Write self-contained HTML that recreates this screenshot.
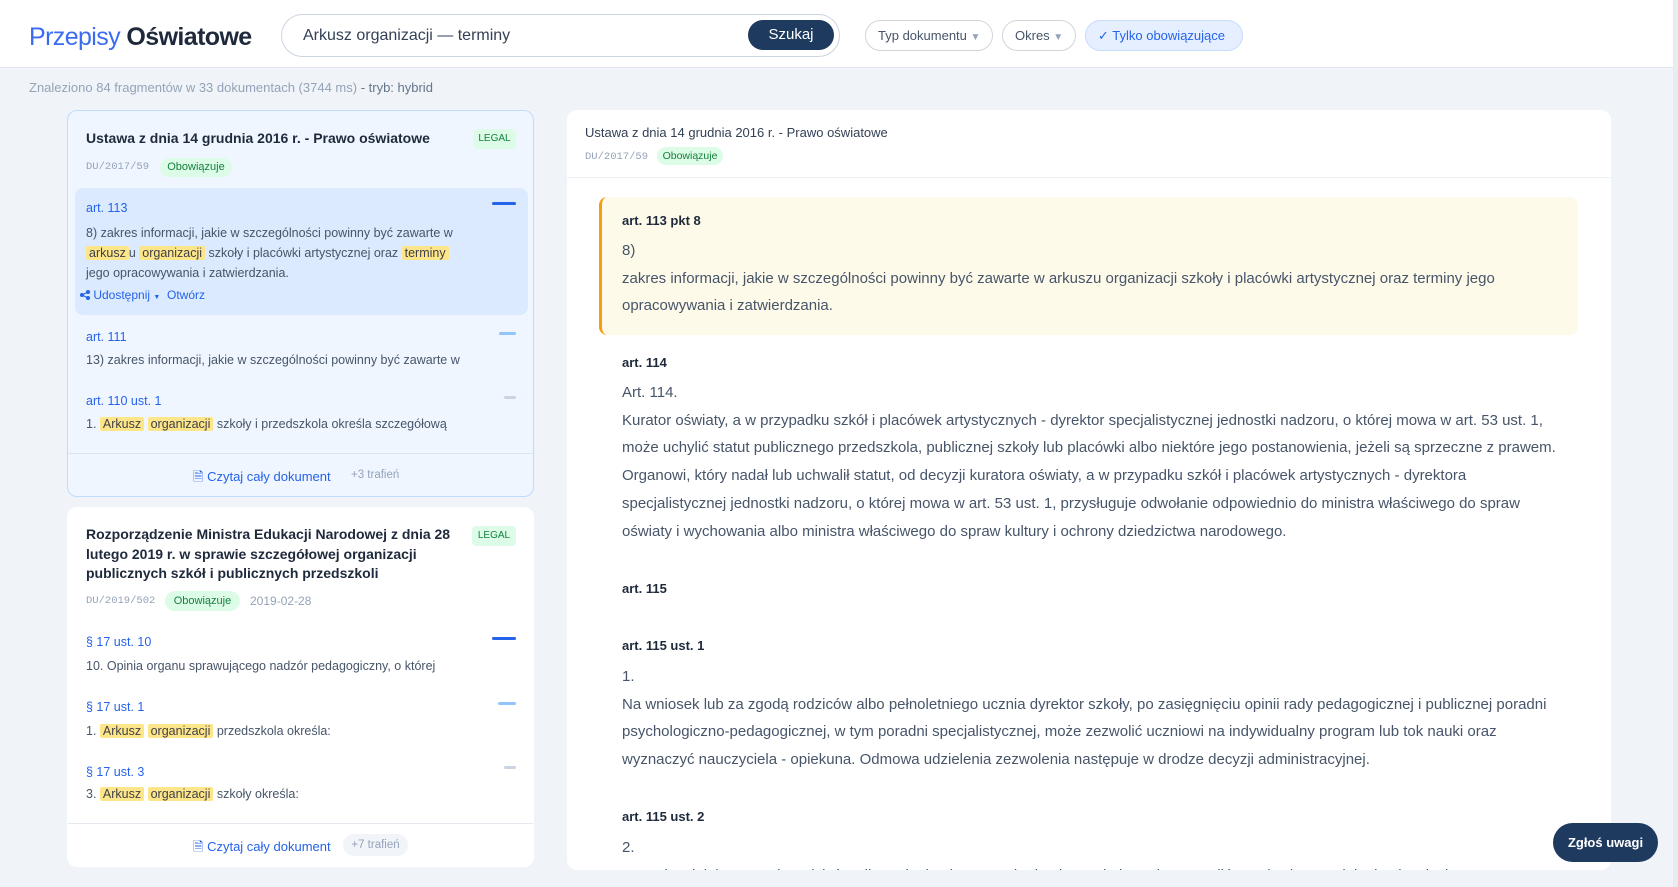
<!DOCTYPE html>
<html><head><meta charset="utf-8">
<style>
*{box-sizing:border-box;margin:0;padding:0}
body{width:1678px;height:887px;overflow:hidden;background:#f0f4f9;font-family:"Liberation Sans",sans-serif;color:#334155;position:relative}
.a{position:absolute;white-space:nowrap}
.hdr{position:absolute;left:0;top:0;width:1678px;height:68px;background:#fff;border-bottom:1px solid #e2e8f0}
.pill{position:absolute;top:20px;height:31px;border:1px solid #d1d5db;border-radius:16px;font-size:13px;line-height:29px;padding:0 12px;color:#475569;background:#fff;white-space:nowrap}
.card{position:absolute;border-radius:10px}
.hl{background:#fde68a;padding:0 3px;border-radius:2px;color:#3f3f46}
.lk{color:#2563eb;font-size:12.5px}
.tx{font-size:12.5px;color:#475569}
.bar{position:absolute;height:3px;border-radius:2px}
.badge{position:absolute;background:#dcfce7;color:#15803d;border-radius:10px;font-size:11px;text-align:center}
.mono{font-family:"Liberation Mono",monospace;font-size:10.5px;color:#94a3b8}
.rb{font-size:13px;font-weight:bold;color:#1e293b}
.rt{font-size:15px;color:#475569;line-height:27.7px}
</style></head><body>
<div class="hdr"></div>
<div class="a" style="left:29px;top:21px;font-size:25px;line-height:32px;letter-spacing:-0.6px"><span style="color:#3b6cf0">Przepisy</span> <span style="color:#1e293b;font-weight:bold">Oświatowe</span></div>
<div class="a" style="left:281px;top:14px;width:559px;height:43px;border:1px solid #cbd5e1;border-radius:22px;background:#fff"></div>
<div class="a" style="left:303px;top:26px;font-size:16px;line-height:20px;color:#334155">Arkusz organizacji — terminy</div>
<div class="a" style="left:748px;top:20px;width:86px;height:30px;border-radius:15px;background:#1e3a5f;color:#fff;font-size:15px;line-height:30px;text-align:center">Szukaj</div>
<div class="pill" style="left:865px;width:128px">Typ dokumentu <span style="color:#94a3b8;font-size:10px">▼</span></div>
<div class="pill" style="left:1002px;width:74px">Okres <span style="color:#94a3b8;font-size:10px">▼</span></div>
<div class="pill" style="left:1085px;width:158px;background:#e5efff;border-color:#c7dbfb;color:#2563eb">✓ Tylko obowiązujące</div>
<div class="a" style="left:1673px;top:0;width:5px;height:887px;background:#e8ebef"></div>

<div class="a" style="left:29px;top:80px;font-size:13px;color:#94a3b8">Znaleziono 84 fragmentów w 33 dokumentach (3744 ms) <span style="color:#64748b">- tryb: hybrid</span></div>

<!-- card 1 -->
<div class="card" style="left:67px;top:110px;width:467px;height:387px;background:#eff6ff;border:1px solid #bfdbfe"></div>
<div class="a" style="left:86px;top:129px;font-size:14px;font-weight:bold;color:#1e293b;line-height:18px">Ustawa z dnia 14 grudnia 2016 r. - Prawo oświatowe</div>
<div class="badge" style="left:473px;top:129px;width:43px;height:20px;line-height:20px;border-radius:4px;font-size:10px">LEGAL</div>
<div class="a mono" style="left:86px;top:161px">DU/2017/59</div>
<div class="badge" style="left:160px;top:158px;width:72px;height:19px;line-height:19px">Obowiązuje</div>
<div class="a" style="left:75px;top:188px;width:453px;height:127px;background:#dbeafe;border-radius:8px"></div>
<div class="bar" style="left:492px;top:202px;width:24px;background:#2563eb"></div>
<div class="a lk" style="left:86px;top:201px">art. 113</div>
<div class="a tx" style="left:86px;top:223px;line-height:20px">8) zakres informacji, jakie w szczególności powinny być zawarte w<br><span class="hl">arkusz</span>u <span class="hl">organizacji</span> szkoły i placówki artystycznej oraz <span class="hl">terminy</span><br>jego opracowywania i zatwierdzania.</div>
<div class="a" style="left:80px;top:288px;font-size:12px;color:#2563eb"><svg width="10" height="10" viewBox="0 0 10 10" style="vertical-align:-1px"><circle cx="2" cy="5" r="2" fill="#2563eb"/><circle cx="8" cy="2" r="2" fill="#2563eb"/><circle cx="8" cy="8" r="2" fill="#2563eb"/><path d="M2 5L8 2M2 5L8 8" stroke="#2563eb" stroke-width="1.2"/></svg> Udostępnij <span style="font-size:7px">▼</span> &nbsp;Otwórz</div>
<div class="bar" style="left:499px;top:332px;width:17px;background:#93c5fd"></div>
<div class="a lk" style="left:86px;top:330px">art. 111</div>
<div class="a tx" style="left:86px;top:353px">13) zakres informacji, jakie w szczególności powinny być zawarte w</div>
<div class="bar" style="left:504px;top:396px;width:12px;background:#cbd5e1"></div>
<div class="a lk" style="left:86px;top:394px">art. 110 ust. 1</div>
<div class="a tx" style="left:86px;top:417px">1. <span class="hl">Arkusz</span> <span class="hl">organizacji</span> szkoły i przedszkola określa szczegółową</div>
<div class="a" style="left:68px;top:453px;width:465px;height:1px;background:#dbe5f0"></div>
<div class="a" style="left:193px;top:468px;font-size:13px;color:#2563eb">🗎 Czytaj cały dokument</div>
<div class="a" style="left:351px;top:469px;font-size:11.5px;color:#94a3b8">+3 trafień</div>

<!-- card 2 -->
<div class="card" style="left:67px;top:507px;width:467px;height:360px;background:#fff"></div>
<div class="a" style="left:86px;top:525px;font-size:14px;font-weight:bold;color:#1e293b;line-height:19.5px">Rozporządzenie Ministra Edukacji Narodowej z dnia 28<br>lutego 2019 r. w sprawie szczegółowej organizacji<br>publicznych szkół i publicznych przedszkoli</div>
<div class="badge" style="left:472px;top:526px;width:44px;height:20px;line-height:20px;border-radius:4px;font-size:10px">LEGAL</div>
<div class="a mono" style="left:86px;top:595px">DU/2019/502</div>
<div class="badge" style="left:165px;top:591px;width:75px;height:20px;line-height:20px">Obowiązuje</div>
<div class="a" style="left:250px;top:594px;font-size:12px;color:#94a3b8">2019-02-28</div>
<div class="bar" style="left:492px;top:637px;width:24px;background:#2563eb"></div>
<div class="a lk" style="left:86px;top:635px">§ 17 ust. 10</div>
<div class="a tx" style="left:86px;top:659px">10. Opinia organu sprawującego nadzór pedagogiczny, o której</div>
<div class="bar" style="left:498px;top:702px;width:18px;background:#93c5fd"></div>
<div class="a lk" style="left:86px;top:700px">§ 17 ust. 1</div>
<div class="a tx" style="left:86px;top:724px">1. <span class="hl">Arkusz</span> <span class="hl">organizacji</span> przedszkola określa:</div>
<div class="bar" style="left:504px;top:766px;width:12px;background:#cbd5e1"></div>
<div class="a lk" style="left:86px;top:765px">§ 17 ust. 3</div>
<div class="a tx" style="left:86px;top:787px">3. <span class="hl">Arkusz</span> <span class="hl">organizacji</span> szkoły określa:</div>
<div class="a" style="left:68px;top:823px;width:465px;height:1px;background:#e5e9ef"></div>
<div class="a" style="left:193px;top:838px;font-size:13px;color:#2563eb">🗎 Czytaj cały dokument</div>
<div class="a" style="left:343px;top:834px;width:65px;height:22px;border-radius:11px;background:#f1f5f9;font-size:11.5px;color:#94a3b8;line-height:22px;text-align:center">+7 trafień</div>

<!-- right panel -->
<div class="card" style="left:567px;top:110px;width:1044px;height:760px;background:#fff;overflow:hidden">
<div class="a" style="left:18px;top:15px;font-size:13px;color:#334155">Ustawa z dnia 14 grudnia 2016 r. - Prawo oświatowe</div>
<div class="a mono" style="left:18px;top:41px">DU/2017/59</div>
<div class="badge" style="left:90px;top:37px;width:66px;height:18px;line-height:18px;font-size:10.5px">Obowiązuje</div>
<div class="a" style="left:0;top:67px;width:1044px;height:1px;background:#eef1f5"></div>
<div class="a" style="left:32px;top:87px;width:979px;height:138px;background:#fefaea;border-left:3px solid #f59e0b;border-radius:8px"></div>
<div class="a rb" style="left:55px;top:103px">art. 113 pkt 8</div>
<div class="a rt" style="left:55px;top:127px">8)<br>zakres informacji, jakie w szczególności powinny być zawarte w arkuszu organizacji szkoły i placówki artystycznej oraz terminy jego<br>opracowywania i zatwierdzania.</div>
<div class="a rb" style="left:55px;top:245px">art. 114</div>
<div class="a rt" style="left:55px;top:269px">Art. 114.<br>Kurator oświaty, a w przypadku szkół i placówek artystycznych - dyrektor specjalistycznej jednostki nadzoru, o której mowa w art. 53 ust. 1,<br>może uchylić statut publicznego przedszkola, publicznej szkoły lub placówki albo niektóre jego postanowienia, jeżeli są sprzeczne z prawem.<br>Organowi, który nadał lub uchwalił statut, od decyzji kuratora oświaty, a w przypadku szkół i placówek artystycznych - dyrektora<br>specjalistycznej jednostki nadzoru, o której mowa w art. 53 ust. 1, przysługuje odwołanie odpowiednio do ministra właściwego do spraw<br>oświaty i wychowania albo ministra właściwego do spraw kultury i ochrony dziedzictwa narodowego.</div>
<div class="a rb" style="left:55px;top:471px">art. 115</div>
<div class="a rb" style="left:55px;top:528px">art. 115 ust. 1</div>
<div class="a rt" style="left:55px;top:553px">1.<br>Na wniosek lub za zgodą rodziców albo pełnoletniego ucznia dyrektor szkoły, po zasięgnięciu opinii rady pedagogicznej i publicznej poradni<br>psychologiczno-pedagogicznej, w tym poradni specjalistycznej, może zezwolić uczniowi na indywidualny program lub tok nauki oraz<br>wyznaczyć nauczyciela - opiekuna. Odmowa udzielenia zezwolenia następuje w drodze decyzji administracyjnej.</div>
<div class="a rb" style="left:55px;top:699px">art. 115 ust. 2</div>
<div class="a rt" style="left:55px;top:724px">2.<br>Na wniosek lub za zgodą rodziców albo pełnoletniego ucznia dyrektor szkoły może zezwolić uczniowi na spełnianie obowiązku</div>
</div>

<div class="a" style="left:1553px;top:823px;width:105px;height:39px;border-radius:20px;background:#1e3a5f;color:#fff;font-size:13px;font-weight:bold;line-height:39px;text-align:center">Zgłoś uwagi</div>
</body></html>
